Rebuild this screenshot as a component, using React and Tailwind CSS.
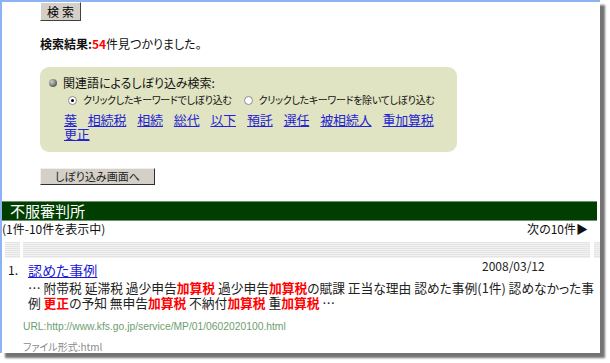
import React from "react";

const links = ["葉", "相続税", "相続", "総代", "以下", "預託", "選任", "被相続人", "重加算税"];

function Radio({ checked }) {
  return (
    <span className="inline-flex items-center justify-center w-[9px] h-[9px] rounded-full border border-[#8a8a8a] bg-white shrink-0">
      {checked && <span className="w-[3px] h-[3px] rounded-full bg-black"></span>}
    </span>
  );
}

function Hit({ children }) {
  return <span className="text-[#ff0000] font-bold">{children}</span>;
}

export default function App() {
  return (
    <div className="w-[610px] h-[363px] bg-white font-['Noto_Sans_CJK_JP',sans-serif] [font-feature-settings:'palt'] text-[#111]">
      <div className="w-[600px] h-[353px] border-l-2 border-t-2 border-[#8cb4f4] bg-white overflow-hidden shadow-[5px_5px_2px_rgba(0,0,0,0.55)]">
        <div className="pl-[38px]">
          <button className="block w-[41px] h-[19px] bg-[#d4d0c8] border border-t-white border-l-white border-r-[#404040] border-b-[#404040] text-[12px] leading-none tracking-[3px] pl-[3px] text-black">
            検索
          </button>

          <p className="mt-[15px] text-[12px] leading-[16px]">
            <span className="font-bold">検索結果:</span>
            <span className="font-bold text-[#ff0000]">54</span>件見つかりました。
          </p>

          <div className="mt-[15px] w-[417px] h-[85px] rounded-[9px] bg-[#e1e4c2] pt-[9px]">
            <div className="flex items-center gap-[6px] pl-[9px] text-[12px] leading-[14px]">
              <span className="w-[8px] h-[8px] rounded-full bg-[radial-gradient(circle_at_35%_35%,#d0d0d0,#606060_70%)]"></span>
              関連語によるしぼり込み検索:
            </div>
            <div className="mt-[3px] flex items-center pl-[28px] text-[10px] leading-[14px] whitespace-nowrap">
              <Radio checked />
              <span className="ml-[6px] tracking-[-0.3px]">クリックしたキーワードでしぼり込む</span>
              <span className="ml-[12px] flex"><Radio /></span>
              <span className="ml-[6px] tracking-[-0.3px]">クリックしたキーワードを除いてしぼり込む</span>
            </div>
            <div className="mt-[6px] pl-[24px] text-[13px] leading-[14px]">
              <div className="flex gap-x-[11px] whitespace-nowrap tracking-[-0.2px]">
                {links.map((w) => (
                  <a key={w} href="#" className="text-[#2424d4] underline">{w}</a>
                ))}
              </div>
              <div className="flex">
                <a href="#" className="text-[#2424d4] underline tracking-[-0.2px]">更正</a>
              </div>
            </div>
          </div>

          <button className="block mt-[16px] w-[115px] h-[17px] bg-[#d4d0c8] border border-t-[#f0f0f0] border-l-[#f0f0f0] border-r-[#303030] border-b-[#303030] text-[11px] leading-none text-[#222]">
            しぼり込み画面へ
          </button>
        </div>

        <div className="mt-[16px] w-[595px] h-[20px] bg-[#003f00] border-y border-[#6f8f6f] flex items-center pl-[8px] text-white text-[15px] leading-[18px]">
          不服審判所
        </div>

        <div className="flex justify-between pr-[12px] h-[16px] text-[12px] leading-[16px]">
          <span>(1件-10件を表示中)</span>
          <span>次の10件▶</span>
        </div>

        <div className="mt-[5px] flex h-[16px] pl-[3px]">
          <div className="w-[15px] bg-[repeating-linear-gradient(to_bottom,#e4e4e4_0px,#e4e4e4_1px,#f2f2f2_1px,#f2f2f2_2px)]"></div>
          <div className="ml-[3px] w-[567px] bg-[repeating-linear-gradient(to_bottom,#e4e4e4_0px,#e4e4e4_1px,#f2f2f2_1px,#f2f2f2_2px)]"></div>
          <div className="ml-[4px] flex-1 bg-[repeating-linear-gradient(to_bottom,#e4e4e4_0px,#e4e4e4_1px,#f2f2f2_1px,#f2f2f2_2px)]"></div>
        </div>

        <div className="mt-[1px] flex items-start">
          <div className="flex items-center mt-[3px] w-[480px] pl-[6px] leading-[16px]">
            <span className="w-[20px] text-[12px]">1.</span>
            <a href="#" className="text-[14px] text-[#1a1ad8] underline">認めた事例</a>
          </div>
          <span className="text-[12px] leading-[14px] text-[#222]">2008/03/12</span>
        </div>

        <div className="mt-[2px] pl-[26px] text-[12.75px] leading-[15px] text-[#222] whitespace-nowrap">
          <div>… 附帯税 延滞税 過少申告<Hit>加算税</Hit> 過少申告<Hit>加算税</Hit>の賦課 正当な理由 認めた事例(1件) 認めなかった事</div>
          <div>例 <Hit>更正</Hit>の予知 無申告<Hit>加算税</Hit> 不納付<Hit>加算税</Hit> 重<Hit>加算税</Hit> …</div>
        </div>

        <p className="mt-[11px] pl-[21px] text-[10.3px] leading-[12px] text-[#6e9e6e] font-['Liberation_Sans',sans-serif]">
          URL:http://www.kfs.go.jp/service/MP/01/0602020100.html
        </p>
        <p className="mt-[8px] pl-[21px] text-[10px] leading-[12px] text-[#8a8a8a]">
          ファイル形式:html
        </p>
      </div>
    </div>
  );
}
